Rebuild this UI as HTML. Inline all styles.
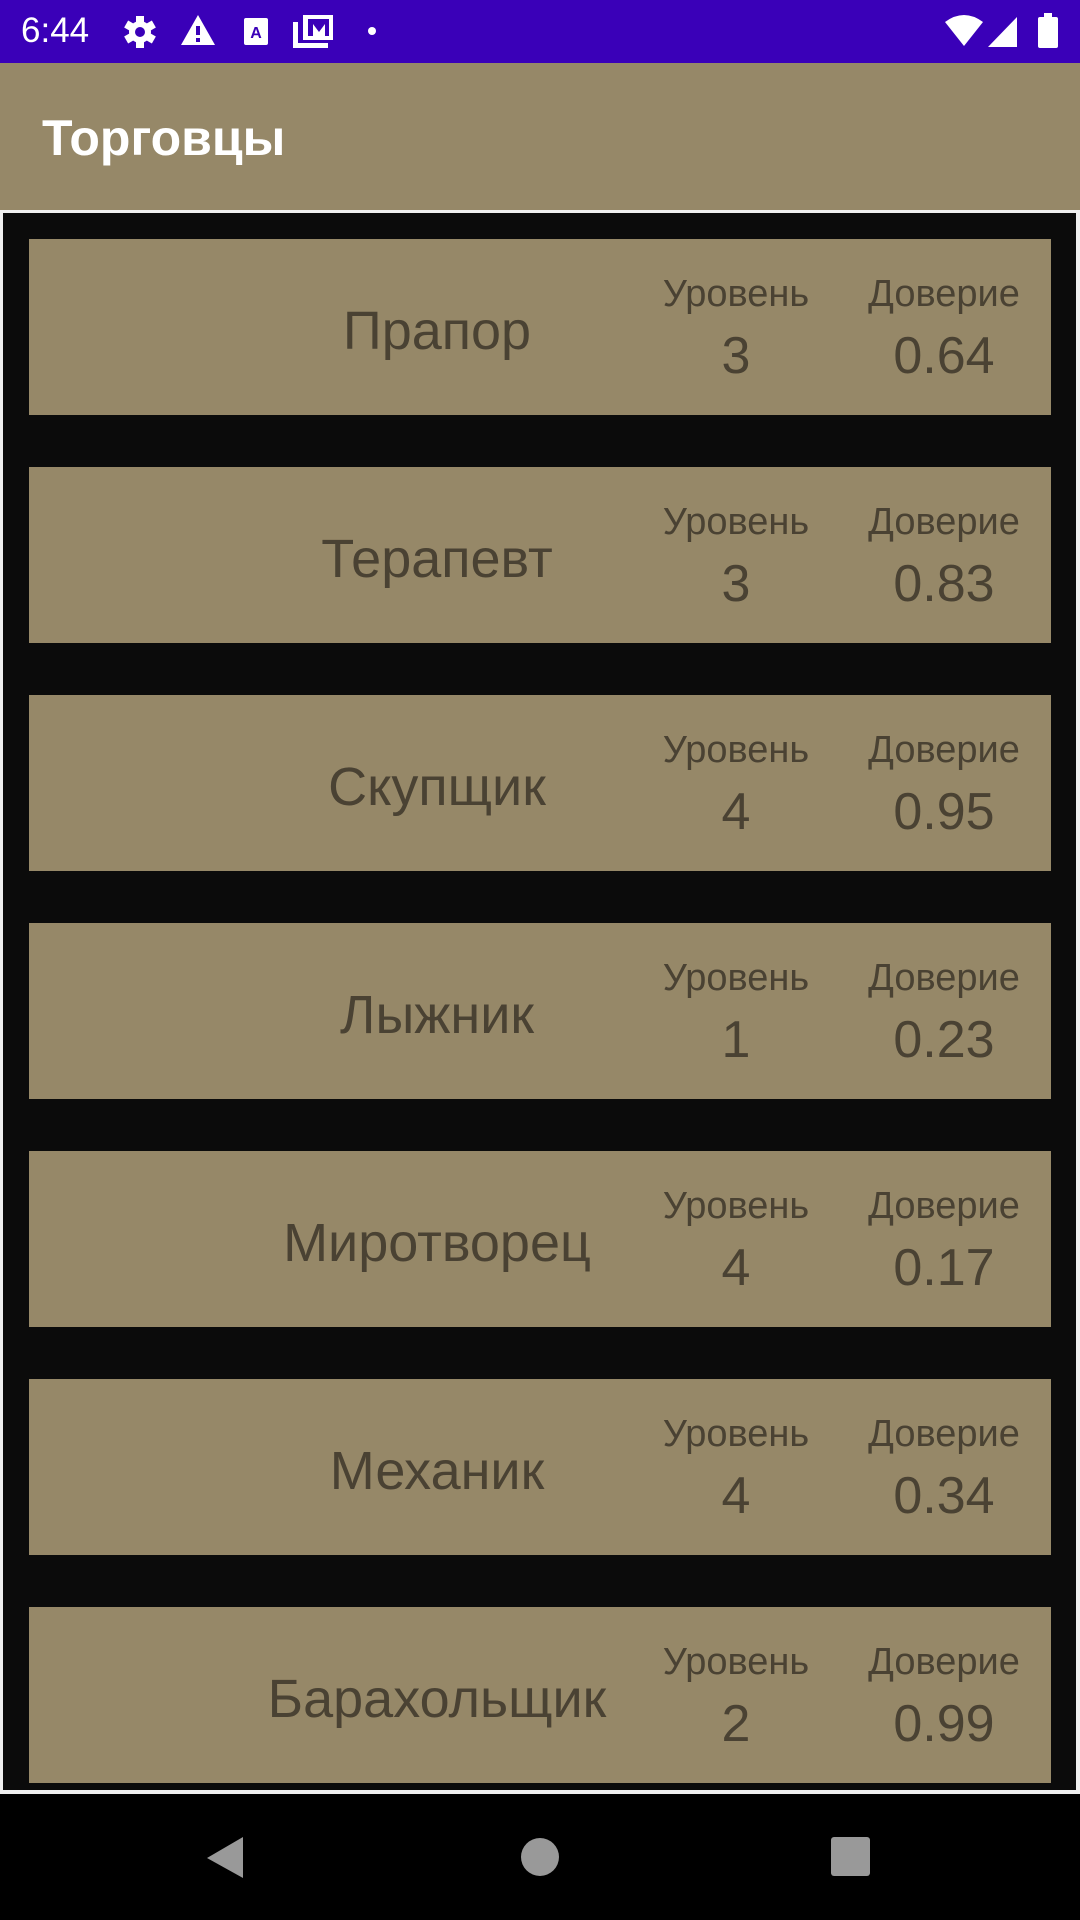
<!DOCTYPE html>
<html><head><meta charset="utf-8"><style>
*{margin:0;padding:0;box-sizing:border-box}
body{width:1080px;height:1920px;position:relative;background:#000;font-family:"Liberation Sans","DejaVu Sans",sans-serif;overflow:hidden}
.abs{position:absolute}
.card{position:absolute;left:29px;width:1022px;height:176px;background:#968868;color:#4a4233}
.name{position:absolute;left:0;width:816px;text-align:center;top:62px;font-size:54px;line-height:60px;white-space:nowrap}
.lab{position:absolute;width:200px;text-align:center;font-size:38px;line-height:40px;top:35px}
.num{position:absolute;width:200px;text-align:center;font-size:52px;line-height:56px;top:89px}
</style></head><body>
<div class="abs" style="left:0;top:0;width:1080px;height:63px;background:#3a00b8"></div>
<div class="abs" style="left:21px;top:10px;color:#fff;font-size:35px;line-height:42px">6:44</div>
<svg class="abs" style="left:0;top:0" width="1080" height="63">
<g fill="#fff">
<circle cx="140" cy="32" r="11"/>
<g transform="translate(140 32)"><rect x="-4" y="-16" width="8" height="32"/><rect x="-4" y="-16" width="8" height="32" transform="rotate(60)"/><rect x="-4" y="-16" width="8" height="32" transform="rotate(120)"/></g>
<path d="M198 15 L215 45 L181 45 Z"/>
<rect x="244" y="18" width="24" height="27" rx="2"/>
<path d="M303 15 h30 v25 h-30 z M293 22 h5 v21 h30 v5 h-35 z"/>
<circle cx="372" cy="31" r="4"/>
<path d="M945 22 Q964 8 983 22 L964 46 Z"/>
<path d="M1017 17 V47 H988 Z"/>
<rect x="1038" y="17" width="20" height="31" rx="2"/><rect x="1044" y="13" width="8" height="5"/>
</g>
<g fill="#3a00b8">
<circle cx="140" cy="32" r="5"/>
<rect x="196" y="26" width="4" height="9"/><rect x="196" y="38" width="4" height="4"/>
<path d="M308 19 h21 v17 h-4 v-12 l-6 8 -6 -8 v12 h-5 z"/>
</g>
<text x="256" y="38" fill="#3a00b8" font-size="16" font-weight="bold" text-anchor="middle" font-family="Liberation Sans">A</text>
</svg>
<div class="abs" style="left:0;top:63px;width:1080px;height:147px;background:#968868"></div>
<div class="abs" style="left:42px;top:108px;color:#fff;font-size:50px;font-weight:bold;line-height:60px">Торговцы</div>
<div class="abs" style="left:0;top:210px;width:1080px;height:1584px;background:#f0f0f0"></div>
<div class="abs" style="left:3px;top:213px;width:1073px;height:1577px;background:#0b0b0b"></div>

<div class="card" style="top:239px"><div class="name">Прапор</div><div class="lab" style="left:607px">Уровень</div><div class="lab" style="left:815px">Доверие</div><div class="num" style="left:607px">3</div><div class="num" style="left:815px">0.64</div></div>
<div class="card" style="top:467px"><div class="name">Терапевт</div><div class="lab" style="left:607px">Уровень</div><div class="lab" style="left:815px">Доверие</div><div class="num" style="left:607px">3</div><div class="num" style="left:815px">0.83</div></div>
<div class="card" style="top:695px"><div class="name">Скупщик</div><div class="lab" style="left:607px">Уровень</div><div class="lab" style="left:815px">Доверие</div><div class="num" style="left:607px">4</div><div class="num" style="left:815px">0.95</div></div>
<div class="card" style="top:923px"><div class="name">Лыжник</div><div class="lab" style="left:607px">Уровень</div><div class="lab" style="left:815px">Доверие</div><div class="num" style="left:607px">1</div><div class="num" style="left:815px">0.23</div></div>
<div class="card" style="top:1151px"><div class="name">Миротворец</div><div class="lab" style="left:607px">Уровень</div><div class="lab" style="left:815px">Доверие</div><div class="num" style="left:607px">4</div><div class="num" style="left:815px">0.17</div></div>
<div class="card" style="top:1379px"><div class="name">Механик</div><div class="lab" style="left:607px">Уровень</div><div class="lab" style="left:815px">Доверие</div><div class="num" style="left:607px">4</div><div class="num" style="left:815px">0.34</div></div>
<div class="card" style="top:1607px"><div class="name">Барахольщик</div><div class="lab" style="left:607px">Уровень</div><div class="lab" style="left:815px">Доверие</div><div class="num" style="left:607px">2</div><div class="num" style="left:815px">0.99</div></div>

<svg class="abs" style="left:0;top:1794px" width="1080" height="126">
<g fill="#999">
<path d="M243 43 V84 L207 64 Z"/>
<circle cx="540" cy="63" r="19"/>
<rect x="831" y="43" width="39" height="39" rx="3"/>
</g>
</svg>
</body></html>
